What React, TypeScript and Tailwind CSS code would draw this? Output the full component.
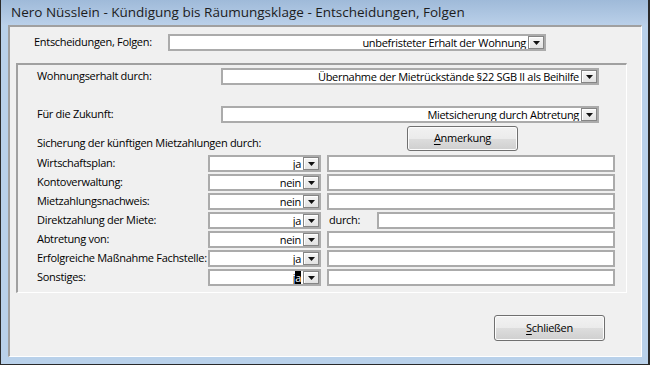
import React from 'react'

const font = { fontFamily: '"Open Sans", "Noto Sans", sans-serif' }

function DropBtn() {
  return (
    <div className="flex h-full w-[16px] shrink-0 items-end justify-center border border-[#858585] bg-gradient-to-b from-[#f6f6f6] to-[#e2e2e2] pb-[3px] shadow-[inset_1px_1px_0_#ffffff]">
      <svg width="7" height="4" viewBox="0 0 7 4">
        <polygon points="0,0 7,0 3.5,4" fill="#111" />
      </svg>
    </div>
  )
}

function Combo({ value, className, children }: { value?: string; className: string; children?: React.ReactNode }) {
  return (
    <div className={`flex h-[17px] shrink-0 border-2 border-[#ababab] bg-white ${className}`}>
      <div className="flex flex-1 items-center justify-end overflow-hidden whitespace-nowrap pr-[2px] leading-[13px]">
        {children ?? value}
      </div>
      <DropBtn />
    </div>
  )
}

function Field({ className }: { className: string }) {
  return <div className={`h-[17px] shrink-0 border-2 border-[#ababab] bg-white ${className}`} />
}

function WinButton({ first, rest, className }: { first: string; rest: string; className: string }) {
  return (
    <div
      className={`flex shrink-0 items-center justify-center rounded-[3px] border border-[#707070] bg-[linear-gradient(#f2f2f2_0%,#ebebeb_50%,#dddddd_51%,#cfcfcf_100%)] shadow-[inset_0_0_0_1px_#fcfcfc] ${className}`}
    >
      <span>
        <span className="underline underline-offset-2">{first}</span>
        {rest}
      </span>
    </div>
  )
}

const rows: { label: string; value: string; durch?: boolean; caret?: boolean }[] = [
  { label: 'Wirtschaftsplan:', value: 'ja' },
  { label: 'Kontoverwaltung:', value: 'nein' },
  { label: 'Mietzahlungsnachweis:', value: 'nein' },
  { label: 'Direktzahlung der Miete:', value: 'ja', durch: true },
  { label: 'Abtretung von:', value: 'nein' },
  { label: 'Erfolgreiche Maßnahme Fachstelle:', value: 'ja' },
  { label: 'Sonstiges:', value: 'ja', caret: true },
]

export default function App() {
  return (
    <div
      className="flex h-[365px] w-[650px] flex-col border-b border-l border-r-2 border-[#2a2a2a] bg-[#b9d1ea] text-[11px] tracking-[-0.3px] text-black"
      style={font}
    >
      {/* title bar */}
      <div className="flex h-[25px] shrink-0 items-center bg-gradient-to-b from-[#9fbad9] to-[#bad0e9] pl-[10px] text-[13.5px] tracking-normal text-[#1c1c1c]">
        Nero Nüsslein - Kündigung bis Räumungsklage - Entscheidungen, Folgen
      </div>

      <div className="flex flex-1 px-[7px] pb-[7px] pr-[6px]">
        {/* client area */}
        <div className="flex h-[332px] w-[634px] flex-col border-b border-l-2 border-r border-t-2 border-b-white border-l-[#a0a0a0] border-r-white border-t-[#a0a0a0] bg-[#f0f0f0]">
          <div className="mt-[7px] flex items-center pl-[24px]">
            <div className="w-[134px]">Entscheidungen, Folgen:</div>
            <Combo className="w-[378px]" value="unbefristeter Erhalt der Wohnung" />
          </div>

          {/* group box */}
          <div className="ml-[6px] mt-[12px] flex h-[230px] w-[611px] flex-col border-b border-l-2 border-r border-t-2 border-b-white border-l-[#a0a0a0] border-r-white border-t-[#a0a0a0] pl-[19px]">
            <div className="mt-[3px] flex items-center">
              <div className="w-[184px]">Wohnungserhalt durch:</div>
              <Combo className="w-[378px]" value="Übernahme der Mietrückstände §22 SGB II als Beihilfe" />
            </div>
            <div className="mt-[21px] flex items-center">
              <div className="w-[184px]">Für die Zukunft:</div>
              <Combo className="w-[378px]" value="Mietsicherung durch Abtretung" />
            </div>
            <div className="mt-[3px] flex h-[25px] items-end">
              <div className="w-[370px] pb-[1px] leading-[14px]">Sicherung der künftigen Mietzahlungen durch:</div>
              <WinButton className="h-[25px] w-[111px]" first="A" rest="nmerkung" />
            </div>
            <div className="mt-[4px] flex flex-col gap-[2px]">
              {rows.map((r) => (
                <div key={r.label} className="flex h-[17px] items-center">
                  <div className="w-[171px] whitespace-nowrap">{r.label}</div>
                  <Combo className="w-[113px]">
                    {r.caret ? (
                      <span>
                        j<span className="bg-black text-white">a</span>
                      </span>
                    ) : (
                      r.value
                    )}
                  </Combo>
                  {r.durch ? (
                    <>
                      <div className="ml-[8px] w-[48px]">durch:</div>
                      <Field className="w-[238px]" />
                    </>
                  ) : (
                    <Field className="ml-[6px] w-[288px]" />
                  )}
                </div>
              ))}
            </div>
          </div>

          <div className="mt-[22px] flex pl-[484px]">
            <WinButton className="h-[26px] w-[111px]" first="S" rest="chließen" />
          </div>
        </div>
      </div>
    </div>
  )
}
